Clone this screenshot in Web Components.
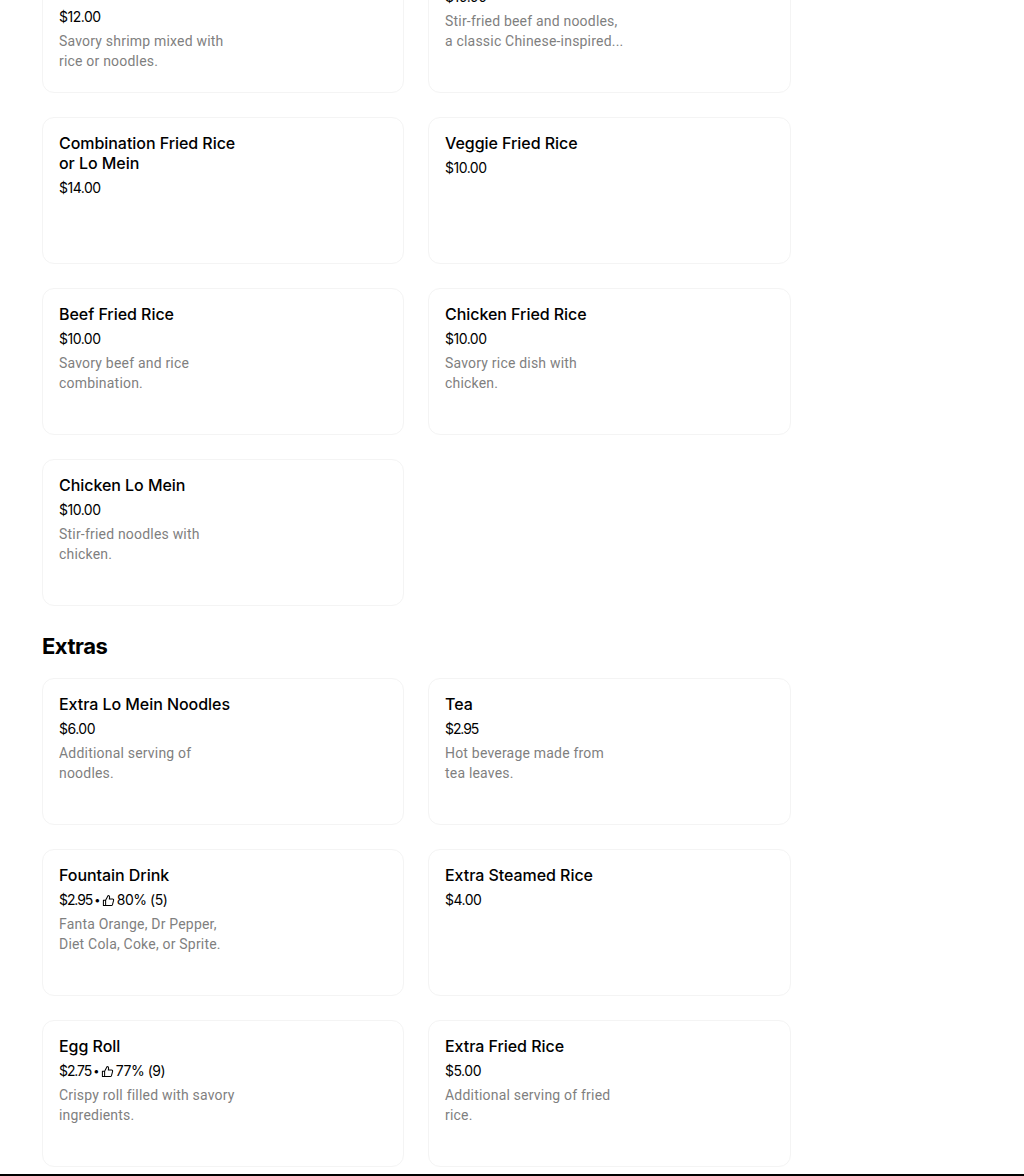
<!DOCTYPE html>
<html><head><meta charset="utf-8">
<style>
html,body{margin:0;padding:0;background:#fff}
body{font-family:Inter,"Liberation Sans",sans-serif;color:#000}
.n{letter-spacing:-1.1px}
</style></head><body>
<template id="t-page"><style>
:host{display:flex;flex-direction:column;justify-content:flex-end;height:1176px;overflow:hidden;background:#fff}
.wrap{flex:none;width:749px;margin-left:42px;display:flex;flex-direction:column}
.bar{flex:none;height:2px;background:#000;margin-top:7px}
</style><div class="wrap"><slot></slot></div><div class="bar"></div></template>

<template id="t-section"><style>
:host{display:block}
h2{margin:0;padding:24px 0 16px;font:700 22px/32px Inter,"Liberation Sans",sans-serif;letter-spacing:-.5px;color:#000}
:host([untitled]) h2{display:none}
.grid{display:grid;grid-template-columns:362px 363px;column-gap:24px;row-gap:24px}
</style><h2><slot name="title"></slot></h2><div class="grid"><slot></slot></div></template>

<template id="t-item"><style>
:host{display:block;box-sizing:border-box;height:147px;border:1px solid #f4f4f4;border-radius:12px;padding:15px 16px;background:#fff}
.t{font:500 16px/20px Inter,"Liberation Sans",sans-serif;color:#000;width:180px;letter-spacing:-.05px}
.m{margin-top:5px;height:20px;font:400 14px/20px Inter,"Liberation Sans",sans-serif;color:#000;display:flex;align-items:center;letter-spacing:-.5px}
.d{margin-top:4px;width:180px;font:400 14px/20px Roboto,"Liberation Sans",sans-serif;color:#7f7f7f;letter-spacing:.2px}
</style><div class="t"><slot name="t"></slot></div><div class="m"><slot name="m"></slot></div><div class="d"><slot name="d"></slot></div></template>

<template id="t-thumb"><style>
:host{display:inline-flex;align-items:center;height:20px;vertical-align:top}
.dot{margin-left:2px;font-size:11px;line-height:20px}
svg{width:13px;height:13px;margin:0 2px 0 2px;flex:none}
</style><span class="dot">•</span><svg viewBox="0 0 14 14" fill="none" stroke="#000" stroke-width="1.1" stroke-linejoin="round" stroke-linecap="round"><path d="M1.5 6.8h2.4v5.7H1.5zM3.9 6.8l2.7-5.2c1 0 1.6.7 1.6 1.7L7.9 5.4h3.5c.8 0 1.3.7 1.1 1.4l-1.2 4.7c-.2.6-.6 1-1.2 1H3.9"/></svg><slot></slot></template>

<menu-page>
<menu-section untitled>
<menu-item><span slot="t">Shrimp Fried Rice or Lo Mein</span><span slot="m">$12.00</span><span slot="d">Savory shrimp mixed with rice or noodles.</span></menu-item>
<menu-item><span slot="t">Beef Chow Mein</span><span slot="m">$10.00</span><span slot="d">Stir-fried beef and noodles, a classic Chinese-inspired...</span></menu-item>
<menu-item><span slot="t">Combination Fried Rice or Lo Mein</span><span slot="m">$14.00</span></menu-item>
<menu-item><span slot="t">Veggie Fried Rice</span><span slot="m">$10.00</span></menu-item>
<menu-item><span slot="t">Beef Fried Rice</span><span slot="m">$10.00</span><span slot="d">Savory beef and rice combination.</span></menu-item>
<menu-item><span slot="t">Chicken Fried Rice</span><span slot="m">$10.00</span><span slot="d">Savory rice dish with chicken.</span></menu-item>
<menu-item><span slot="t">Chicken Lo Mein</span><span slot="m">$10.00</span><span slot="d">Stir-fried noodles with chicken.</span></menu-item>
</menu-section>
<menu-section>
<span slot="title">Extras</span>
<menu-item><span slot="t">Extra Lo Mein Noodles</span><span slot="m">$6.00</span><span slot="d">Additional serving of noodles.</span></menu-item>
<menu-item><span slot="t">Tea</span><span slot="m" class="n">$2.95</span><span slot="d">Hot beverage made from tea leaves.</span></menu-item>
<menu-item><span slot="t">Fountain Drink</span><span slot="m"><span class="n">$2.95</span><item-thumb>80% (5)</item-thumb></span><span slot="d">Fanta Orange, Dr Pepper, Diet Cola, Coke, or Sprite.</span></menu-item>
<menu-item><span slot="t">Extra Steamed Rice</span><span slot="m">$4.00</span></menu-item>
<menu-item><span slot="t">Egg Roll</span><span slot="m"><span class="n">$2.75</span><item-thumb>77% (9)</item-thumb></span><span slot="d">Crispy roll filled with savory ingredients.</span></menu-item>
<menu-item><span slot="t">Extra Fried Rice</span><span slot="m">$5.00</span><span slot="d">Additional serving of fried rice.</span></menu-item>
</menu-section>
</menu-page>
<script>
for (const [tag,id] of [['menu-page','t-page'],['menu-section','t-section'],['menu-item','t-item'],['item-thumb','t-thumb']]) {
  customElements.define(tag, class extends HTMLElement {
    constructor(){super();this.attachShadow({mode:'open'}).appendChild(document.getElementById(id).content.cloneNode(true));}
  });
}
</script>
</body></html>
